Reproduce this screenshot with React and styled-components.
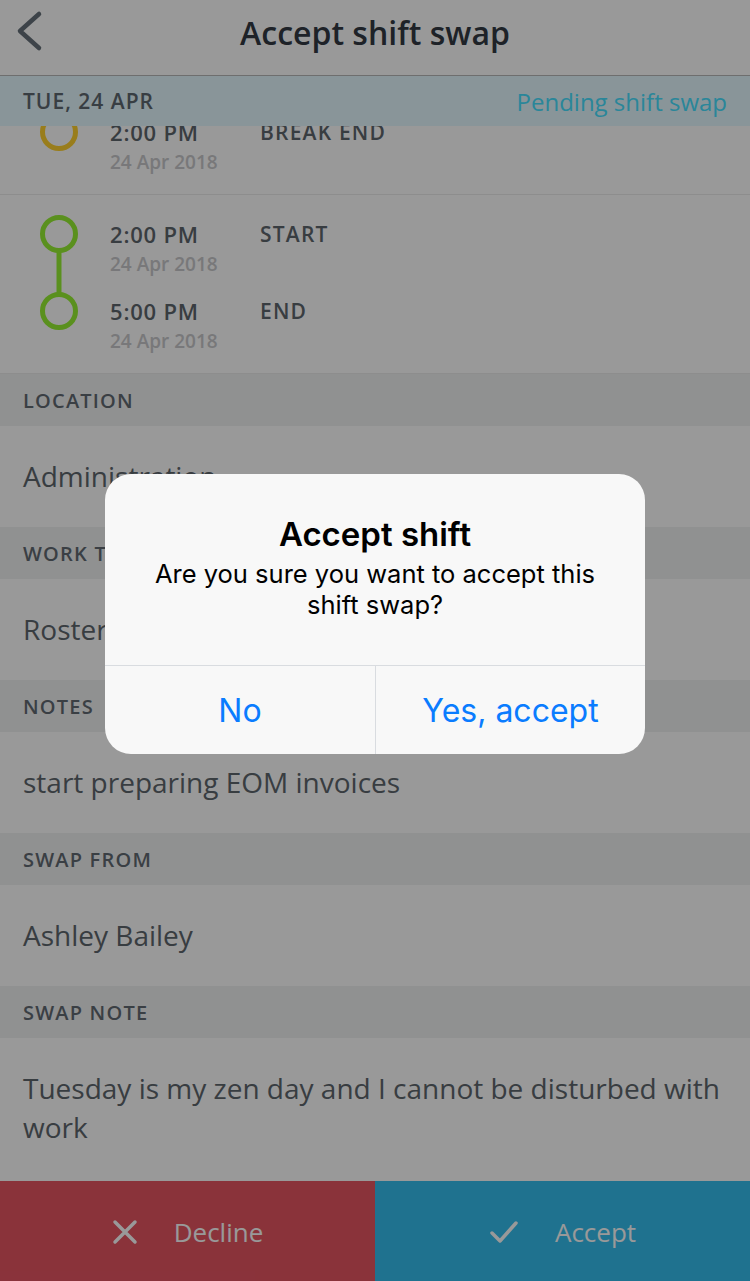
import React from "react";
import styled, { createGlobalStyle } from "styled-components";

const GlobalStyle = createGlobalStyle`
  html, body {
    margin: 0;
    padding: 0;
    background: #fff;
  }
  body {
    font-family: "Open Sans", "Lato", sans-serif;
    -webkit-font-smoothing: antialiased;
  }
`;

const shift = {
  date: "TUE, 24 APR",
  status: "Pending shift swap",
  events: [
    { id: 1, color: "#ffd12f", items: [{ time: "2:00 PM", date: "24 Apr 2018", label: "BREAK END" }] },
    {
      id: 2,
      color: "#97f032",
      items: [
        { time: "2:00 PM", date: "24 Apr 2018", label: "START" },
        { time: "5:00 PM", date: "24 Apr 2018", label: "END" },
      ],
    },
  ],
  sections: [
    { title: "LOCATION", value: "Administration" },
    { title: "WORK TYPE", value: "Roster" },
    { title: "NOTES", value: "start preparing EOM invoices" },
    { title: "SWAP FROM", value: "Ashley Bailey" },
    { title: "SWAP NOTE", value: "Tuesday is my zen day and I cannot be disturbed with work" },
  ],
};

const BackIcon = () => (
  <svg width="30" height="42" viewBox="0 0 30 42">
    <polyline points="25,4 6,21 25,38" fill="none" stroke="#66717a" strokeWidth="4.5" strokeLinecap="round" strokeLinejoin="round" />
  </svg>
);

const Marker = ({ color, connect }) => (
  <svg width="38" height="38" viewBox="0 0 38 38" style={{ overflow: "visible" }}>
    {connect && <line x1="19" y1="36" x2="19" y2="79" stroke={color} strokeWidth="5" />}
    <circle cx="19" cy="19" r="16.5" fill="none" stroke={color} strokeWidth="5" />
  </svg>
);

const CrossIcon = () => (
  <svg width="26" height="26" viewBox="0 0 26 26">
    <path d="M3 3 L23 23 M23 3 L3 23" stroke="#fff" strokeWidth="3.5" strokeLinecap="round" />
  </svg>
);

const CheckIcon = () => (
  <svg width="30" height="26" viewBox="0 0 30 26">
    <path d="M3 14 L11 22 L27 4" fill="none" stroke="#fff" strokeWidth="3.5" strokeLinecap="round" strokeLinejoin="round" />
  </svg>
);

export default function App() {
  return (
    <>
      <GlobalStyle />
      <Screen>
        <NavBar>
          <BackButton>
            <BackIcon />
          </BackButton>
          <NavTitle>Accept shift swap</NavTitle>
        </NavBar>

        <Content>
          <DateBar>
            <DateText>{shift.date}</DateText>
            <StatusText>{shift.status}</StatusText>
          </DateBar>

          <Scroll>
            {shift.events.map((group) => (
              <EventRow key={group.id}>
                {group.items.map((item, i) => (
                  <EventItem key={i}>
                    <MarkerCell>
                      <Marker color={group.color} connect={i < group.items.length - 1} />
                    </MarkerCell>
                    <TimeCol>
                      <TimeText>{item.time}</TimeText>
                      <DateSmall>{item.date}</DateSmall>
                    </TimeCol>
                    <EventLabel>{item.label}</EventLabel>
                  </EventItem>
                ))}
              </EventRow>
            ))}

            {shift.sections.map((s) => (
              <React.Fragment key={s.title}>
                <SectionHeader>{s.title}</SectionHeader>
                <SectionValue>{s.value}</SectionValue>
              </React.Fragment>
            ))}
          </Scroll>
        </Content>

        <Footer>
          <FooterButton $bg="#e65562">
            <CrossIcon />
            <span>Decline</span>
          </FooterButton>
          <FooterButton $bg="#34beee">
            <CheckIcon />
            <span>Accept</span>
          </FooterButton>
        </Footer>

        <Dim />

        <DialogLayer>
          <Dialog>
            <DialogBody>
              <DialogTitle>Accept shift</DialogTitle>
              <DialogMessage>Are you sure you want to accept this shift swap?</DialogMessage>
            </DialogBody>
            <DialogActions>
              <DialogButton>No</DialogButton>
              <DialogButton>Yes, accept</DialogButton>
            </DialogActions>
          </Dialog>
        </DialogLayer>
      </Screen>
    </>
  );
}

const Screen = styled.div`
  position: relative;
  width: 750px;
  height: 1281px;
  display: flex;
  flex-direction: column;
  overflow: hidden;
  background: #fff;
`;

const NavBar = styled.div`
  height: 75px;
  flex-shrink: 0;
  display: flex;
  align-items: center;
  justify-content: center;
  position: relative;
  border-bottom: 1px solid #b8b8b8;
  background: #fff;
`;

const BackButton = styled.div`
  position: absolute;
  left: 14px;
  top: 10px;
  display: flex;
`;

const NavTitle = styled.div`
  font-size: 32px;
  font-weight: 600;
  color: #323a43;
  margin-bottom: 10px;
`;

const Content = styled.div`
  position: relative;
  flex: 1;
  overflow: hidden;
`;

const DateBar = styled.div`
  position: absolute;
  top: 0;
  left: 0;
  right: 0;
  height: 50px;
  z-index: 2;
  display: flex;
  align-items: center;
  justify-content: space-between;
  padding: 0 23px;
  background: #e4f8ff;
`;

const DateText = styled.div`
  font-size: 21px;
  font-weight: 600;
  letter-spacing: 1px;
  color: #5e6870;
`;

const StatusText = styled.div`
  font-size: 24px;
  font-weight: 400;
  color: #46e0ff;
`;

const Scroll = styled.div`
  display: flex;
  flex-direction: column;
  padding-top: 17px;
`;

const EventRow = styled.div`
  display: flex;
  flex-direction: column;
  gap: 17px;
  padding: 24px 0 17px;
  border-bottom: 1px solid #ececec;
`;

const EventItem = styled.div`
  display: grid;
  grid-template-columns: 38px 118px 1fr;
  column-gap: 32px;
  padding-left: 40px;
  align-items: start;
`;

const MarkerCell = styled.div`
  margin-top: -4px;
  height: 38px;
`;

const TimeCol = styled.div`
  display: flex;
  flex-direction: column;
`;

const TimeText = styled.div`
  font-size: 22px;
  line-height: 30px;
  font-weight: 600;
  letter-spacing: 0.8px;
  color: #5e666d;
`;

const DateSmall = styled.div`
  font-size: 19px;
  line-height: 30px;
  font-weight: 600;
  color: #c8c9cb;
`;

const EventLabel = styled.div`
  font-size: 21px;
  line-height: 30px;
  font-weight: 600;
  color: #5e666d;
  letter-spacing: 1.2px;
`;

const SectionHeader = styled.div`
  height: 52px;
  display: flex;
  align-items: center;
  padding: 0 23px;
  background: #f1f2f2;
  font-size: 20px;
  font-weight: 600;
  color: #626a72;
  letter-spacing: 1.2px;
`;

const SectionValue = styled.div`
  padding: 31px 23px;
  font-size: 28px;
  line-height: 39px;
  font-weight: 400;
  color: #5e666d;
  background: #fff;
`;

const Footer = styled.div`
  height: 100px;
  flex-shrink: 0;
  display: grid;
  grid-template-columns: 1fr 1fr;
`;

const FooterButton = styled.div`
  display: flex;
  align-items: center;
  justify-content: center;
  gap: 36px;
  background: ${({ $bg }) => $bg};
  color: #fff;
  font-size: 26px;
  padding-top: 2px;
`;

const Dim = styled.div`
  position: absolute;
  inset: 0;
  background: rgba(0, 0, 0, 0.4);
  z-index: 5;
`;

const DialogLayer = styled.div`
  position: absolute;
  inset: 0;
  z-index: 6;
  display: flex;
  align-items: flex-start;
  justify-content: center;
  padding-top: 474px;
`;

const Dialog = styled.div`
  width: 540px;
  background: #f8f8f8;
  border-radius: 26px;
  overflow: hidden;
  font-family: "Inter", "Liberation Sans", sans-serif;
`;

const DialogBody = styled.div`
  height: 192px;
  box-sizing: border-box;
  padding: 38px 40px 0;
  text-align: center;
  border-bottom: 1px solid #d9dce0;
`;

const DialogTitle = styled.div`
  font-size: 33px;
  font-weight: 600;
  color: #000;
  line-height: 44px;
  margin-bottom: 2px;
`;

const DialogMessage = styled.div`
  font-size: 25.5px;
  line-height: 31px;
  color: #000;
`;

const DialogActions = styled.div`
  display: grid;
  grid-template-columns: 1fr 1fr;
  height: 88px;
`;

const DialogButton = styled.div`
  display: flex;
  align-items: center;
  justify-content: center;
  font-size: 32px;
  color: #0a7cff;

  & + & {
    border-left: 1px solid #d9dce0;
  }
`;
